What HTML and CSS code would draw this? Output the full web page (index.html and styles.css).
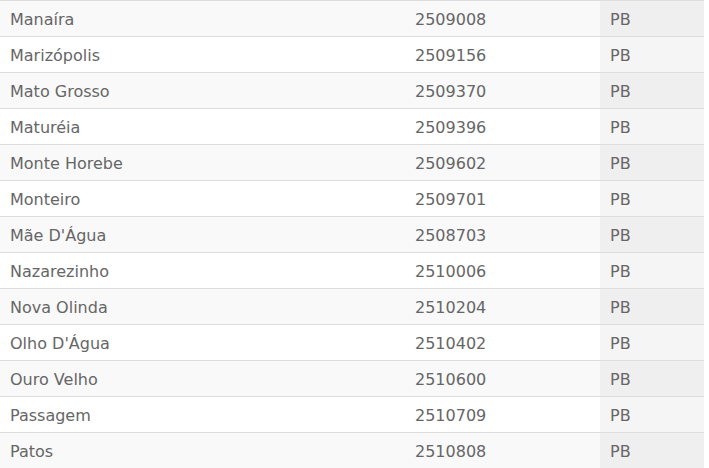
FILE: index.html
```html
<!DOCTYPE html>
<html lang="pt-BR">
<head>
<meta charset="utf-8">
<link rel="stylesheet" href="styles.css">
</head>
<body>
<table class="cities">
  <colgroup>
    <col class="c-name">
    <col class="c-code">
    <col class="c-uf">
  </colgroup>
  <tbody>
    <tr><td>Manaíra</td><td>2509008</td><td class="uf">PB</td></tr>
    <tr><td>Marizópolis</td><td>2509156</td><td class="uf">PB</td></tr>
    <tr><td>Mato Grosso</td><td>2509370</td><td class="uf">PB</td></tr>
    <tr><td>Maturéia</td><td>2509396</td><td class="uf">PB</td></tr>
    <tr><td>Monte Horebe</td><td>2509602</td><td class="uf">PB</td></tr>
    <tr><td>Monteiro</td><td>2509701</td><td class="uf">PB</td></tr>
    <tr><td>Mãe D'Água</td><td>2508703</td><td class="uf">PB</td></tr>
    <tr><td>Nazarezinho</td><td>2510006</td><td class="uf">PB</td></tr>
    <tr><td>Nova Olinda</td><td>2510204</td><td class="uf">PB</td></tr>
    <tr><td>Olho D'Água</td><td>2510402</td><td class="uf">PB</td></tr>
    <tr><td>Ouro Velho</td><td>2510600</td><td class="uf">PB</td></tr>
    <tr><td>Passagem</td><td>2510709</td><td class="uf">PB</td></tr>
    <tr><td>Patos</td><td>2510808</td><td class="uf">PB</td></tr>
  </tbody>
</table>
</body>
</html>
```

FILE: styles.css
```css
html, body {
  margin: 0;
  padding: 0;
  background: #ffffff;
}

.cities {
  width: 704px;
  border-collapse: collapse;
  table-layout: fixed;
  font-family: "DejaVu Sans", Verdana, sans-serif;
  font-size: 16px;
  color: #666666;
}

.c-name { width: 405px; }
.c-code { width: 195px; }
.c-uf { width: 104px; }

.cities td {
  height: 33px;
  padding: 2px 10px 0;
  border-top: 1px solid #dddddd;
  vertical-align: middle;
  white-space: nowrap;
}

.cities tr:nth-child(odd) td {
  background: #f9f9f9;
}

.cities td.uf {
  background: #f5f5f5;
}

.cities tr:nth-child(odd) td.uf {
  background: #efefef;
}
```
